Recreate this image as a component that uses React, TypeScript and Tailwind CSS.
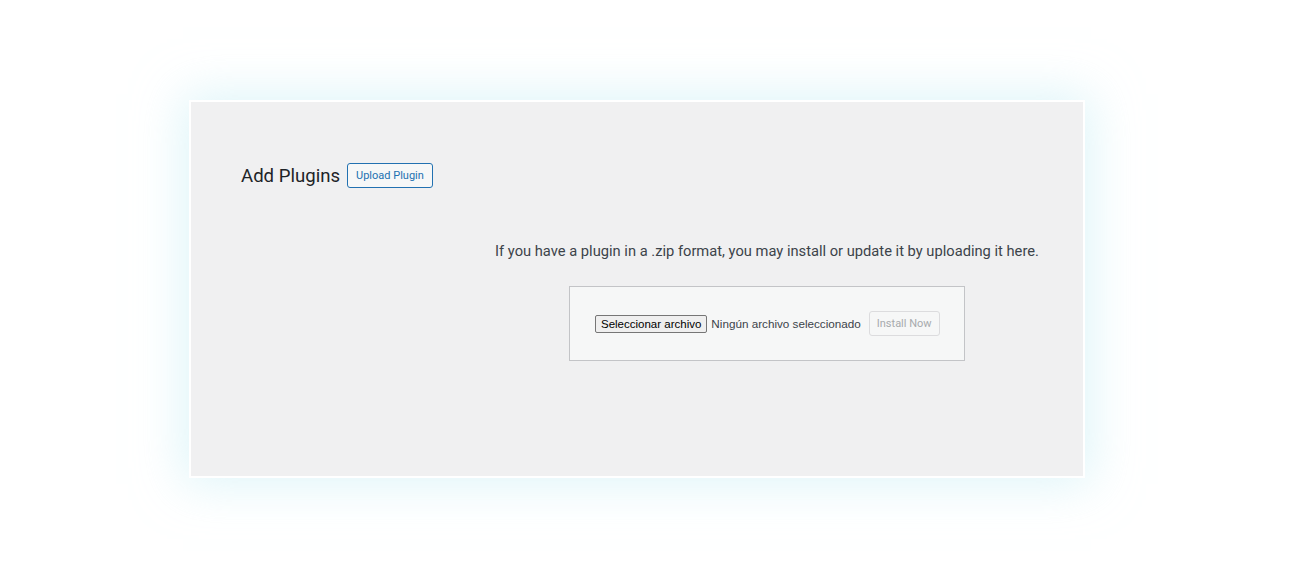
export default function App() {
  return (
    <div className="w-[1300px] h-[579px] bg-white relative" style={{ fontFamily: "Roboto, 'Noto Sans', sans-serif" }}>
      <div className="pt-[100px] pl-[189px]">
        <div className="w-[896px] h-[378px] border-2 border-white bg-[#f0f0f1] shadow-[0_0_45px_6px_rgba(200,238,245,0.6)]">
          <div className="pt-[61px] pl-[50px] flex items-center gap-[7px]">
            <h1 className="text-[18.6px] leading-[24px] text-[#1d2327] font-normal">Add Plugins</h1>
            <button className="h-[25px] px-[8px] border border-[#2271b1] rounded-[3px] text-[11px] text-[#2271b1] bg-[#f6f7f7] leading-none">
              Upload Plugin
            </button>
          </div>
          <div className="ml-[260px] w-[632px] flex flex-col items-center">
            <p className="mt-[51px] text-[14.7px] leading-[24px] text-[#3c434a] whitespace-nowrap">
              If you have a plugin in a .zip format, you may install or update it by uploading it here.
            </p>
            <div className="mt-[23px] w-[396px] h-[75px] border border-[#c3c4c7] bg-[#f6f7f7] flex items-center pl-[25px]">
              <div className="flex items-center" style={{ fontFamily: "'Liberation Sans', Arial, sans-serif" }}>
                <span className="h-[18px] px-[5px] border border-[#767676] rounded-[2px] bg-[#efefef] text-[11.5px] leading-[16px] text-black">
                  Seleccionar archivo
                </span>
                <span className="ml-[4px] text-[11.7px] text-[#3c434a]">Ningún archivo seleccionado</span>
              </div>
              <button className="ml-[8px] h-[25px] px-[7px] border border-[#dcdcde] rounded-[3px] text-[11px] text-[#a7aaad] bg-[#f6f7f7] leading-none">
                Install Now
              </button>
            </div>
          </div>
        </div>
      </div>
    </div>
  );
}
